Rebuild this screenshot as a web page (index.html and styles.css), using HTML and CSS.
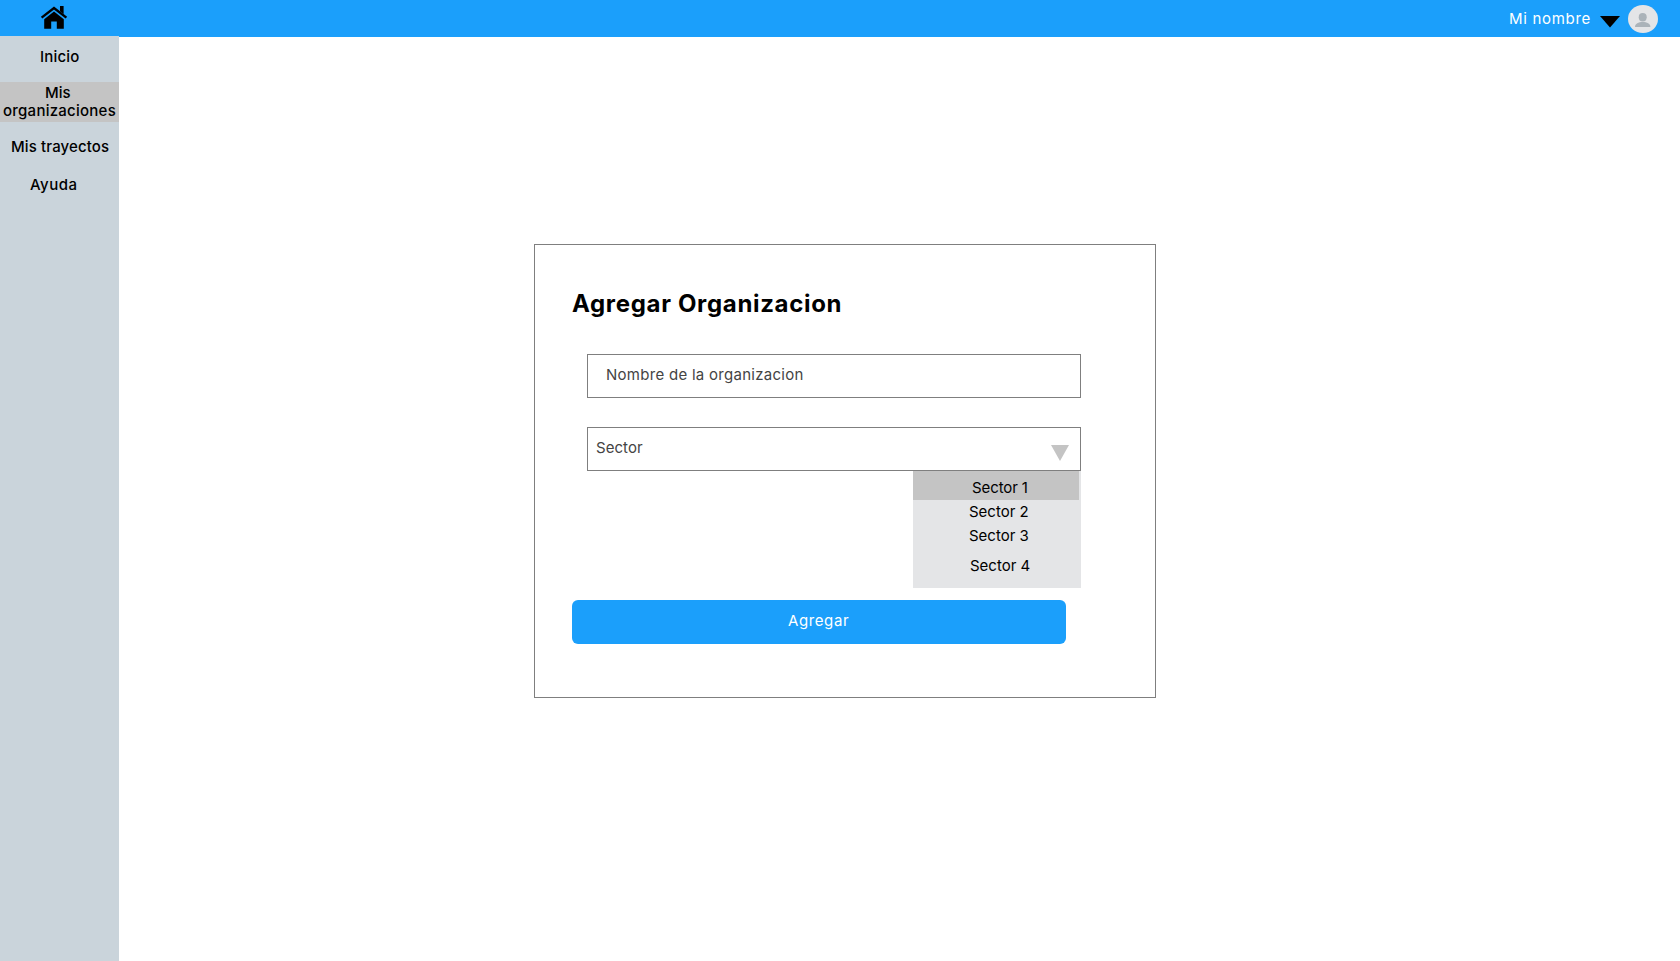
FILE: index.html
```html
<!DOCTYPE html>
<html lang="es">
<head>
<meta charset="utf-8">
<title>Agregar Organizacion</title>
<link rel="stylesheet" href="styles.css">
</head>
<body>
<header class="topbar">
  <a class="home" href="#" aria-label="Inicio">
    <svg width="28" height="24" viewBox="0 0 28 24">
      <path d="M14 5.600 23.800 13.300V22.700H16.800V15.500H11.200V22.700H4.200V13.300Z"/>
      <path d="M1.600 11.600 14 2 26.400 11.600" fill="none" stroke="#000" stroke-width="2.400"/>
      <path d="M20 0h3.600v8L20 5.200Z"/>
    </svg>
  </a>
  <div class="account">
    <span class="username">Mi nombre</span>
    <svg class="caret" width="20" height="12" viewBox="0 0 20 12"><path d="M0 0H20L10 11.500Z"/></svg>
    <svg class="avatar" width="30" height="28" viewBox="0 0 30 28">
      <ellipse cx="15" cy="14" rx="15" ry="14" fill="#e4e5e7"/>
      <ellipse cx="14.700" cy="12.300" rx="4" ry="4.200" fill="#abb3b9"/>
      <path d="M7 22c0-3.500 3.400-5 7.700-5s7.700 1.500 7.700 5Z" fill="#abb3b9"/>
    </svg>
  </div>
</header>
<div class="layout">
  <nav class="sidebar">
    <a class="nav-item inicio">Inicio</a>
    <a class="nav-item active"><span class="mis">Mis</span><span class="orgs">organizaciones</span></a>
    <a class="nav-item trips">Mis trayectos</a>
    <a class="nav-item help">Ayuda</a>
  </nav>
  <main class="content">
    <form class="card">
      <h1 class="title">Agregar Organizacion</h1>
      <div class="field name"><span class="label-name">Nombre de la organizacion</span></div>
      <div class="field select">
        <span class="label-sector">Sector</span>
        <svg class="arrow" width="18" height="16" viewBox="0 0 18 16"><path d="M0 0H18L9 16Z" fill="#c4c4c4"/></svg>
      </div>
      <div class="menu">
        <div class="option chosen"><span class="s1">Sector 1</span></div>
        <div class="option second"><span class="s2">Sector 2</span></div>
        <div class="option third"><span class="s2">Sector 3</span></div>
        <div class="option fourth"><span class="s4">Sector 4</span></div>
      </div>
      <div class="submit"><span>Agregar</span></div>
    </form>
  </main>
</div>
</body>
</html>
```
FILE: styles.css
```css
* { box-sizing: border-box; }
body {
  margin: 0;
  height: 961px;
  overflow: hidden;
  background: #fff;
  color: #000;
  font: 15px/18px Inter, "Open Sans", sans-serif;
}
span, .nav-item, .title { white-space: nowrap; }
svg { display: block; flex: none; }
.topbar {
  display: flex;
  justify-content: space-between;
  height: 37px;
  background: #1b9ffb;
}
.home { padding: 6px 0 0 40px; }
.account { display: flex; padding-right: 22px; }
.username { width: 81px; margin: 10px 10px 0 0; color: #fff; letter-spacing: .7px; }
.caret { margin: 16px 8px 0 0; }
.avatar { margin-top: 5px; }
.layout { display: flex; height: 925px; margin-top: -1px; }
.sidebar { width: 119px; background: #cad4db; font-weight: 500; }
.nav-item { display: block; height: 38px; }
.inicio { height: 46px; padding: 12px 0 0 40px; letter-spacing: .2px; }
.active { display: flex; flex-direction: column; height: 40px; padding-top: 2px; background: #c4c4c4; }
.mis { padding-left: 45px; }
.orgs { padding-left: 3px; letter-spacing: .25px; }
.trips { padding: 16px 0 0 11px; letter-spacing: .13px; }
.help { padding: 16px 0 0 30px; letter-spacing: .5px; }
.content { flex: 1; padding: 208px 0 0 415px; }
.card {
  width: 622px;
  height: 454px;
  padding: 43px 37px 0;
  border: 1px solid #7f7f7f;
}
.title { margin: 0 0 34px; font-size: 24px; line-height: 32px; font-weight: 700; letter-spacing: .67px; }
.field {
  display: flex;
  width: 494px;
  height: 44px;
  margin-left: 15px;
  border: 1px solid #7f7f7f;
  color: #444;
}
.name { margin-bottom: 29px; padding: 11px 0 0 18px; }
.label-name { letter-spacing: .28px; }
.select { justify-content: space-between; padding: 11px 11px 0 8px; }
.label-sector { letter-spacing: .05px; }
.arrow { margin-top: 6px; }
.menu { width: 168px; height: 117px; margin-left: 341px; background: #e4e5e7; }
.chosen { width: 166px; height: 29px; padding: 8px 0 0 59px; background: #c4c4c4; letter-spacing: -.1px; }
.second { height: 24px; padding: 3px 0 0 56px; }
.third { height: 24px; padding: 3px 0 0 56px; }
.fourth { padding: 9px 0 0 57px; }
.submit {
  display: flex;
  width: 494px;
  height: 44px;
  margin-top: 12px;
  padding: 12px 0 0 216px;
  border-radius: 6px;
  background: #1b9ffb;
  color: #fff;
  letter-spacing: .6px;
}
```
